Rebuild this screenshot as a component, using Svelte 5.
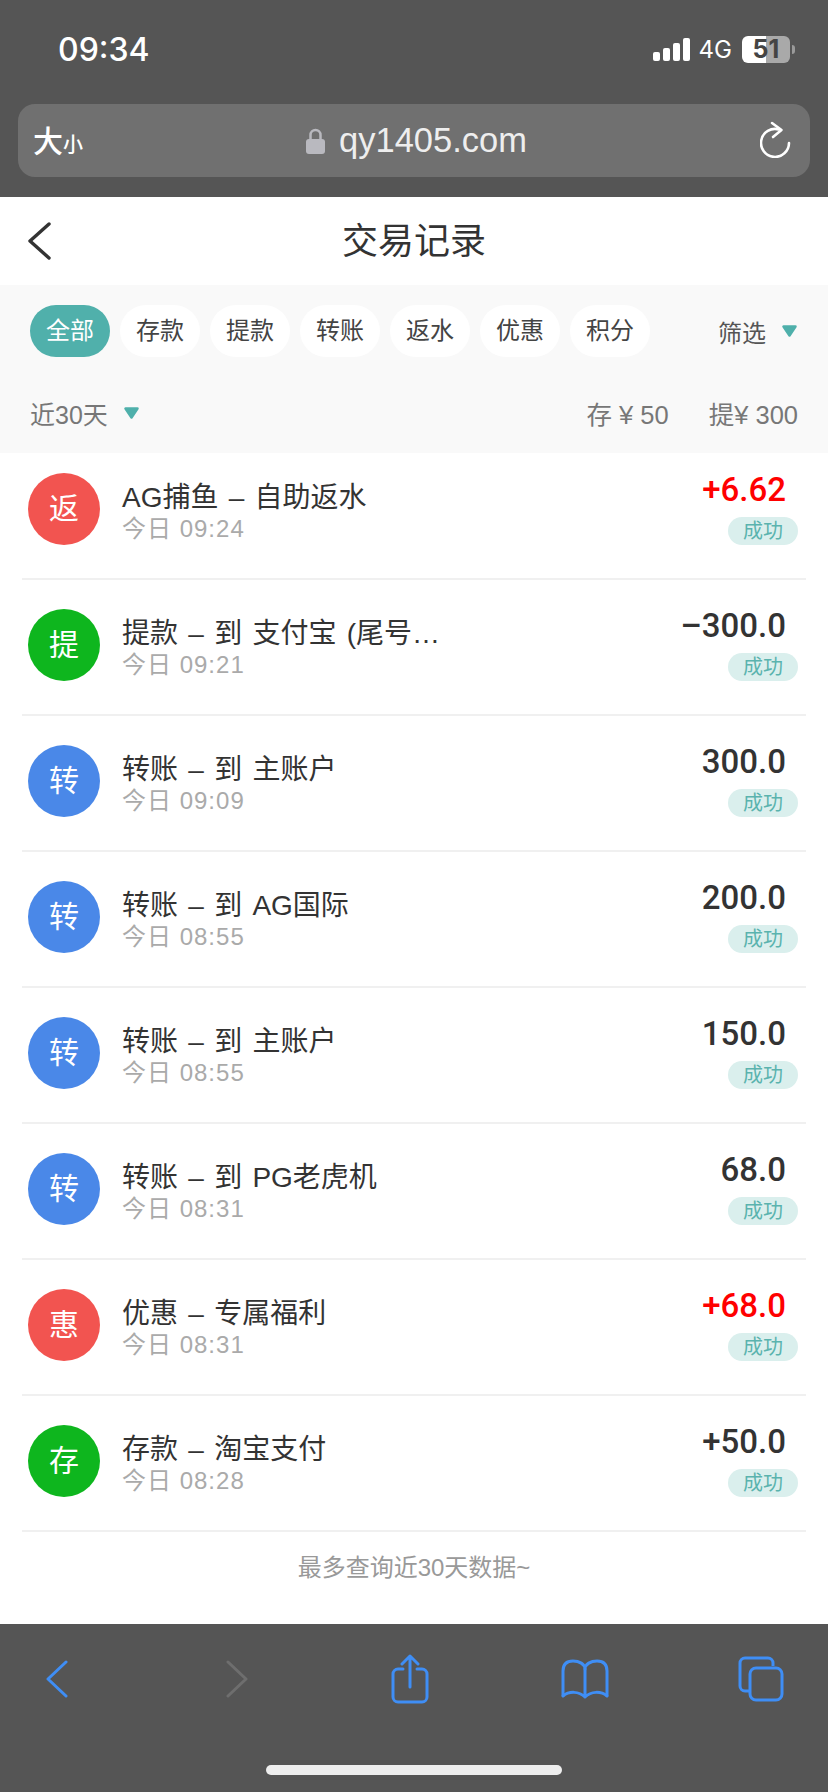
<script>
  const tabs = ['全部', '存款', '提款', '转账', '返水', '优惠', '积分'];
  const colors = { red: '#f25450', green: '#0eb61e', blue: '#4a88e8' };

  const records = [
    { icon: '返', color: 'red', title: 'AG捕鱼 – 自助返水', time: '今日 09:24', amount: '+6.62', hot: true },
    { icon: '提', color: 'green', title: '提款 – 到 支付宝 (尾号…', time: '今日 09:21', amount: '–300.0' },
    { icon: '转', color: 'blue', title: '转账 – 到 主账户', time: '今日 09:09', amount: '300.0' },
    { icon: '转', color: 'blue', title: '转账 – 到 AG国际', time: '今日 08:55', amount: '200.0' },
    { icon: '转', color: 'blue', title: '转账 – 到 主账户', time: '今日 08:55', amount: '150.0' },
    { icon: '转', color: 'blue', title: '转账 – 到 PG老虎机', time: '今日 08:31', amount: '68.0' },
    { icon: '惠', color: 'red', title: '优惠 – 专属福利', time: '今日 08:31', amount: '+68.0', hot: true },
    { icon: '存', color: 'green', title: '存款 – 淘宝支付', time: '今日 08:28', amount: '+50.0' }
  ];
</script>

{#snippet caret()}
  <svg class="caret" width="17" height="14" viewBox="0 0 17 14">
    <path d="M2.500 2.500h12L8.500 11.500z" fill="#4fb0ab" stroke="#4fb0ab" stroke-width="2.500" stroke-linejoin="round" />
  </svg>
{/snippet}

<div class="page">
  <div class="browser-top">
    <div class="status">
      <span class="clock">09:34</span>
      <div class="status-right">
        <div class="signal">
          <i style="height: 9px"></i>
          <i style="height: 13px"></i>
          <i style="height: 18px"></i>
          <i style="height: 23px"></i>
        </div>
        <span class="net">4G</span>
        <div class="battery">51</div>
        <span class="battery-tip"></span>
      </div>
    </div>
    <div class="urlbar">
      <div class="url-side"><span class="big">大</span><span class="small">小</span></div>
      <div class="url">
        <svg width="19" height="26" viewBox="0 0 19 26">
          <path d="M4.500 12V7a5 5 0 0 1 10 0v5" fill="none" stroke="#b9b9bf" stroke-width="2.500" />
          <rect x="0" y="11" width="19" height="15" rx="3" fill="#b9b9bf" />
        </svg>
        <span>qy1405.com</span>
      </div>
      <div class="url-side right">
        <svg width="32" height="38" viewBox="0 0 32 38" fill="none" stroke="#fff" stroke-width="2.600" stroke-linecap="round" stroke-linejoin="round">
          <path d="M19 9.500A14 14 0 1 0 29 23" />
          <path d="M12 3l9.500 7L13 17" />
        </svg>
      </div>
    </div>
  </div>

  <header class="nav">
    <svg class="nav-back" width="26" height="40" viewBox="0 0 26 40" fill="none" stroke="#333" stroke-width="3.400" stroke-linecap="round" stroke-linejoin="round">
      <path d="M23 3L4 20l19 17" />
    </svg>
    <h1>交易记录</h1>
  </header>

  <section class="filters">
    <div class="tabs-row">
      <div class="tabs">
        {#each tabs as tab, i}
          <span class="tab" class:active={i === 0}>{tab}</span>
        {/each}
      </div>
      <div class="pick">筛选 {@render caret()}</div>
    </div>
    <div class="summary">
      <div class="range">近30天 {@render caret()}</div>
      <div class="totals">
        <span>存 ¥ 50</span>
        <span>提¥ 300</span>
      </div>
    </div>
  </section>

  <ul class="list">
    {#each records as r}
      <li class="row">
        <span class="avatar" style="background: {colors[r.color]}">{r.icon}</span>
        <div class="info">
          <div class="title">{r.title}</div>
          <div class="time">{r.time}</div>
        </div>
        <div class="side">
          <div class="amount" class:hot={r.hot}>{r.amount}</div>
          <span class="badge">成功</span>
        </div>
      </li>
    {/each}
  </ul>

  <p class="end">最多查询近30天数据~</p>

  <footer class="browser-bottom">
    <div class="tools">
      <svg width="22" height="38" viewBox="0 0 22 38" fill="none" stroke="#3f8ef5" stroke-width="3" stroke-linecap="round" stroke-linejoin="round">
        <path d="M20 2L2 19l18 17" />
      </svg>
      <svg width="22" height="38" viewBox="0 0 22 38" fill="none" stroke="#6e6e6e" stroke-width="3" stroke-linecap="round" stroke-linejoin="round">
        <path d="M2 2l18 17L2 36" />
      </svg>
      <svg width="38" height="50" viewBox="0 0 38 50" fill="none" stroke="#3f8ef5" stroke-width="3" stroke-linecap="round" stroke-linejoin="round">
        <path d="M12 15H7a5 5 0 0 0-5 5v23a5 5 0 0 0 5 5h24a5 5 0 0 0 5-5V20a5 5 0 0 0-5-5h-5" />
        <path d="M19 33V2M11 10l8-8 8 8" />
      </svg>
      <svg width="48" height="40" viewBox="0 0 48 40" fill="none" stroke="#3f8ef5" stroke-width="3" stroke-linecap="round" stroke-linejoin="round">
        <path d="M2 36V12C2 5 6 2 12 2c6 0 12 3 12 8 0-5 6-8 12-8 6 0 10 3 10 10v24" />
        <path d="M24 10v28M2 37c6-5 16-5 22 1 6-6 16-6 22-1" />
      </svg>
      <svg class="tabs-icon" width="46" height="46" viewBox="0 0 46 46" fill="none" stroke="#3f8ef5" stroke-width="3">
        <path d="M35 10V7a5 5 0 0 0-5-5H7a5 5 0 0 0-5 5v23a5 5 0 0 0 5 5h4" />
        <rect x="12" y="12" width="32" height="32" rx="6" />
      </svg>
    </div>
    <div class="home"></div>
  </footer>
</div>

<style>
  :global(body) {
    margin: 0;
    background: #fff;
  }

  .page {
    width: 828px;
    height: 1792px;
    overflow: hidden;
    display: flex;
    flex-direction: column;
    font-family: "Liberation Sans", "Noto Sans CJK SC", sans-serif;
    color: #333;
  }

  .browser-top {
    height: 197px;
    box-sizing: border-box;
    background: #555;
    padding-top: 20px;
  }

  .status {
    height: 58px;
    margin-bottom: 26px;
    padding: 0 33px 0 58px;
    display: flex;
    align-items: center;
    justify-content: space-between;
    color: #fff;
  }

  .clock {
    font-family: Inter, sans-serif;
    font-size: 32px;
    font-weight: 500;
  }

  .status-right {
    display: flex;
    align-items: center;
  }

  .signal {
    display: flex;
    align-items: flex-end;
    gap: 3px;
    margin-right: 9px;
  }

  .signal i {
    width: 7px;
    background: #fff;
    border-radius: 2px;
  }

  .net {
    font-family: Inter, sans-serif;
    font-size: 24px;
    margin-right: 10px;
  }

  .battery {
    width: 48px;
    height: 27px;
    border-radius: 6px;
    background: linear-gradient(90deg, #fff 50%, #a9a9a9 50%);
    color: #444;
    font-family: Inter, sans-serif;
    font-size: 25px;
    font-weight: 700;
    line-height: 27px;
    text-align: center;
  }

  .battery-tip {
    width: 3px;
    height: 9px;
    margin-left: 2px;
    background: #9a9a9a;
    border-radius: 0 3px 3px 0;
  }

  .urlbar {
    height: 73px;
    margin: 0 18px;
    padding: 0 18px 0 15px;
    background: #707070;
    border-radius: 17px;
    display: flex;
    align-items: center;
    justify-content: space-between;
  }

  .url-side {
    width: 60px;
    margin-top: -3px;
    color: #fff;
    display: flex;
    align-items: baseline;
    font-weight: 500;
  }

  .url-side.right {
    justify-content: flex-end;
    align-items: center;
  }

  .big {
    font-size: 30px;
  }

  .small {
    font-size: 20px;
  }

  .url {
    margin-left: 8px;
    display: flex;
    align-items: center;
    gap: 14px;
    color: #eee;
    font-size: 34.500px;
  }

  .nav {
    height: 88px;
    box-sizing: border-box;
    padding-bottom: 6px;
    position: relative;
    display: flex;
    align-items: center;
    justify-content: center;
    background: #fff;
  }

  .nav-back {
    position: absolute;
    left: 26px;
    top: 24px;
  }

  h1 {
    margin: 0;
    font-size: 36px;
    font-weight: 400;
    color: #333;
  }

  .filters {
    height: 168px;
    box-sizing: border-box;
    padding: 20px 30px 0;
    background: #f9f9f9;
  }

  .tabs-row {
    display: flex;
    align-items: center;
    justify-content: space-between;
  }

  .tabs {
    display: flex;
    gap: 10px;
  }

  .tab {
    width: 80px;
    height: 52px;
    border-radius: 26px;
    background: #fff;
    font-size: 24px;
    line-height: 52px;
    text-align: center;
    color: #444;
  }

  .tab.active {
    background: #50b0ab;
    color: #fff;
  }

  .pick,
  .range {
    display: flex;
    align-items: center;
    gap: 15px;
    font-size: 24px;
    color: #555;
  }

  .summary {
    margin-top: 37px;
    display: flex;
    align-items: center;
    justify-content: space-between;
    font-size: 25.500px;
    color: #777;
  }

  .range {
    font-size: 25px;
    color: #777;
  }

  .totals {
    display: flex;
    gap: 40px;
  }

  .list {
    margin: 0;
    padding: 0 22px;
    list-style: none;
    background: #fff;
  }

  .row {
    height: 136px;
    box-sizing: border-box;
    padding: 29px 8px 0 6px;
    border-bottom: 2px solid #f0f0f0;
    display: flex;
    align-items: flex-start;
  }

  .row:first-child {
    height: 127px;
    padding-top: 20px;
  }

  .avatar {
    width: 72px;
    height: 72px;
    flex-shrink: 0;
    border-radius: 50%;
    color: #fff;
    font-size: 30px;
    line-height: 72px;
    text-align: center;
  }

  .info {
    width: 320px;
    margin-left: 22px;
    flex-shrink: 0;
    padding-top: 6px;
  }

  .title {
    font-size: 28px;
    line-height: 38px;
    word-spacing: 2.500px;
    color: #333;
    white-space: nowrap;
  }

  .time {
    margin-top: -4px;
    font-size: 24px;
    line-height: 32px;
    letter-spacing: 1px;
    color: #aaa;
  }

  .side {
    flex: 1;
    margin-top: -3px;
    display: flex;
    flex-direction: column;
    align-items: flex-end;
  }

  .amount {
    padding-right: 12px;
    font-family: Roboto, "Liberation Sans", sans-serif;
    font-size: 33px;
    font-weight: 500;
    line-height: 40px;
    color: #333;
  }

  .amount.hot {
    color: #f00;
  }

  .badge {
    width: 70px;
    height: 28px;
    margin-top: 7px;
    border-radius: 14px;
    background: #daefed;
    color: #5ab3ae;
    font-size: 20px;
    line-height: 28px;
    text-align: center;
  }

  .end {
    height: 92px;
    margin: 0;
    font-size: 24px;
    line-height: 72px;
    text-align: center;
    color: #999;
    background: #fff;
  }

  .browser-bottom {
    flex: 1;
    background: #555;
    position: relative;
  }

  .tools {
    display: grid;
    grid-template-columns: 114px 246px 100px 250px 100px;
    justify-items: center;
    align-items: center;
    padding-top: 30px;
  }

  .tabs-icon {
    margin-left: 2px;
  }

  .home {
    position: absolute;
    left: 266px;
    top: 141px;
    width: 296px;
    height: 10px;
    border-radius: 5px;
    background: #eee;
  }
</style>
